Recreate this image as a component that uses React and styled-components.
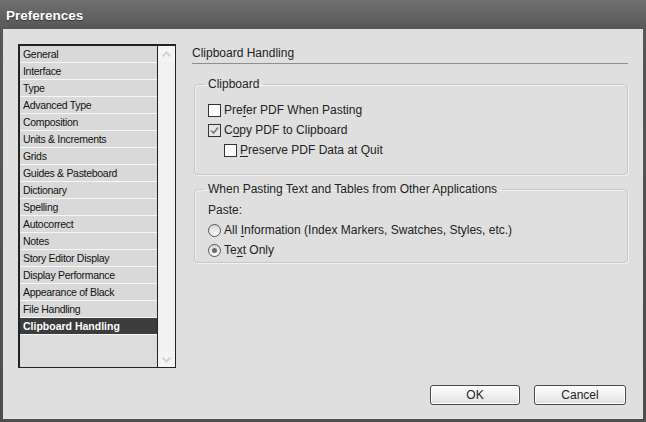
import React from "react";
import styled, { createGlobalStyle } from "styled-components";

const Global = createGlobalStyle`
  html, body { margin: 0; padding: 0; background: #4a4a4a; }
  body { font-family: "Liberation Sans", Arial, sans-serif; }
`;

const Window = styled.div`
  width: 646px;
  height: 422px;
  box-sizing: border-box;
  display: flex;
  flex-direction: column;
  background: linear-gradient(#707070, #575757 29px, #4e4e4e);
  padding: 0 3px 3px 3px;
`;

const TitleBar = styled.div`
  height: 29px;
  display: flex;
  align-items: center;
  padding: 2px 0 0 3px;
  box-sizing: border-box;
  color: #fff;
  font-weight: bold;
  font-size: 13.5px;
  text-shadow: 0 1px 1px rgba(0, 0, 0, 0.5);
`;

const Body = styled.div`
  flex: 1;
  background: #dfdfdf;
  display: flex;
  flex-direction: column;
  padding: 15px 15px 14px 15px;
`;

const Main = styled.div`
  display: flex;
  gap: 16px;
`;

const ListBox = styled.div`
  width: 158px;
  height: 324px;
  box-sizing: border-box;
  border: 1px solid #222;
  border-left-width: 2px;
  border-top-width: 2px;
  display: flex;
  background: #dcdcdc;
`;

const Items = styled.ul`
  flex: 1;
  margin: 0;
  padding: 0;
  list-style: none;
`;

const Item = styled.li`
  height: 17px;
  box-sizing: border-box;
  border-bottom: 1px solid #f6f6f6;
  display: flex;
  align-items: center;
  padding-left: 3px;
  font-size: 10.5px;
  letter-spacing: ${(p) => (p.$selected ? "0" : "-0.3px")};
  color: ${(p) => (p.$selected ? "#fff" : "#111")};
  background: ${(p) => (p.$selected ? "#3c3c3c" : "#d9d9d9")};
  font-weight: ${(p) => (p.$selected ? "bold" : "normal")};
`;

const ScrollBar = styled.div`
  width: 17px;
  border-left: 1px solid #222;
  background: #f1f1f1;
  display: flex;
  flex-direction: column;
  justify-content: space-between;
`;

const ScrollBtn = styled.div`
  height: 16px;
  display: flex;
  align-items: center;
  justify-content: center;
  background: #f4f4f4;
`;

const Right = styled.div`
  flex: 1;
  display: flex;
  flex-direction: column;
  font-size: 12px;
  color: #222;
`;

const Header = styled.div`
  padding: 2px 0 3px 0;
  border-bottom: 1px solid #8f8f8f;
  font-size: 12px;
  margin-bottom: 13px;
`;

const Group = styled.fieldset`
  margin: 0 0 7px 2px;
  padding: ${(p) => p.$pad};
  border: 1px solid #c6c6c6;
  border-radius: 4px;
  box-shadow: inset 1px 1px 0 #f2f2f2, 1px 1px 0 #f2f2f2;
  display: flex;
  flex-direction: column;
`;

const Legend = styled.legend`
  padding: 0 4px;
  margin-left: -4px;
  font-size: 12px;
  color: #222;
`;

const Row = styled.label`
  display: flex;
  align-items: center;
  gap: 3px;
  height: ${(p) => p.$h || 20}px;
  padding-left: ${(p) => (p.$indent ? "16px" : "0")};
  u { text-decoration: underline; text-underline-offset: 2px; }
`;

const Box = styled.span`
  width: 11px;
  height: 11px;
  border: 1px solid #333;
  background: ${(p) => (p.$checked ? "#e6e6e6" : "#fff")};
  display: inline-flex;
  align-items: center;
  justify-content: center;
`;

const Radio = styled.span`
  width: 11px;
  height: 11px;
  border: 1px solid #555;
  border-radius: 50%;
  background: linear-gradient(#d8d8d8, #fbfbfb);
  display: inline-flex;
  align-items: center;
  justify-content: center;
  &::after {
    content: "";
    width: 5px;
    height: 5px;
    border-radius: 50%;
    background: ${(p) => (p.$checked ? "#6a6a6a" : "transparent")};
  }
`;

const Footer = styled.div`
  margin-top: auto;
  display: flex;
  justify-content: flex-end;
  gap: 14px;
  padding-right: 2px;
`;

const Button = styled.button`
  width: ${(p) => p.$w}px;
  height: 20px;
  border: 1px solid #4a4a4a;
  border-radius: 3px;
  background: linear-gradient(#fdfdfd, #eeeeee 60%, #dedede);
  box-shadow: inset 0 0 0 1px #fff;
  font-family: "Liberation Sans", Arial, sans-serif;
  font-size: 12px;
  color: #222;
  padding: 0;
`;

const items = [
  "General",
  "Interface",
  "Type",
  "Advanced Type",
  "Composition",
  "Units & Increments",
  "Grids",
  "Guides & Pasteboard",
  "Dictionary",
  "Spelling",
  "Autocorrect",
  "Notes",
  "Story Editor Display",
  "Display Performance",
  "Appearance of Black",
  "File Handling",
  "Clipboard Handling",
];

const Chevron = ({ up }) => (
  <svg width="11" height="7" viewBox="0 0 11 7">
    <path
      d={up ? "M1.5 5.5 L5.5 1.5 L9.5 5.5" : "M1.5 1.5 L5.5 5.5 L9.5 1.5"}
      fill="none"
      stroke="#d2d2d2"
      strokeWidth="2"
    />
  </svg>
);

const Check = () => (
  <svg width="9" height="9" viewBox="0 0 9 9">
    <path d="M1 4.5 L3.5 7 L8 1.5" fill="none" stroke="#777" strokeWidth="1.6" />
  </svg>
);

export default function App() {
  return (
    <>
      <Global />
      <Window>
        <TitleBar>Preferences</TitleBar>
        <Body>
          <Main>
            <ListBox>
              <Items>
                {items.map((t) => (
                  <Item key={t} $selected={t === "Clipboard Handling"}>
                    {t}
                  </Item>
                ))}
              </Items>
              <ScrollBar>
                <ScrollBtn>
                  <Chevron up />
                </ScrollBtn>
                <ScrollBtn>
                  <Chevron />
                </ScrollBtn>
              </ScrollBar>
            </ListBox>
            <Right>
              <Header>Clipboard Handling</Header>
              <Group $pad="9px 13px 14px 13px">
                <Legend>Clipboard</Legend>
                <Row>
                  <Box />
                  <span>
                    Pre<u>f</u>er PDF When Pasting
                  </span>
                </Row>
                <Row>
                  <Box $checked>
                    <Check />
                  </Box>
                  <span>
                    C<u>o</u>py PDF to Clipboard
                  </span>
                </Row>
                <Row $indent>
                  <Box />
                  <span>
                    <u>P</u>reserve PDF Data at Quit
                  </span>
                </Row>
              </Group>
              <Group $pad="3px 13px 2px 13px">
                <Legend>When Pasting Text and Tables from Other Applications</Legend>
                <Row $h={21}>Paste:</Row>
                <Row>
                  <Radio />
                  <span>
                    All <u>I</u>nformation (Index Markers, Swatches, Styles, etc.)
                  </span>
                </Row>
                <Row>
                  <Radio $checked />
                  <span>
                    Te<u>x</u>t Only
                  </span>
                </Row>
              </Group>
            </Right>
          </Main>
          <Footer>
            <Button $w={90}>OK</Button>
            <Button $w={92}>Cancel</Button>
          </Footer>
        </Body>
      </Window>
    </>
  );
}
